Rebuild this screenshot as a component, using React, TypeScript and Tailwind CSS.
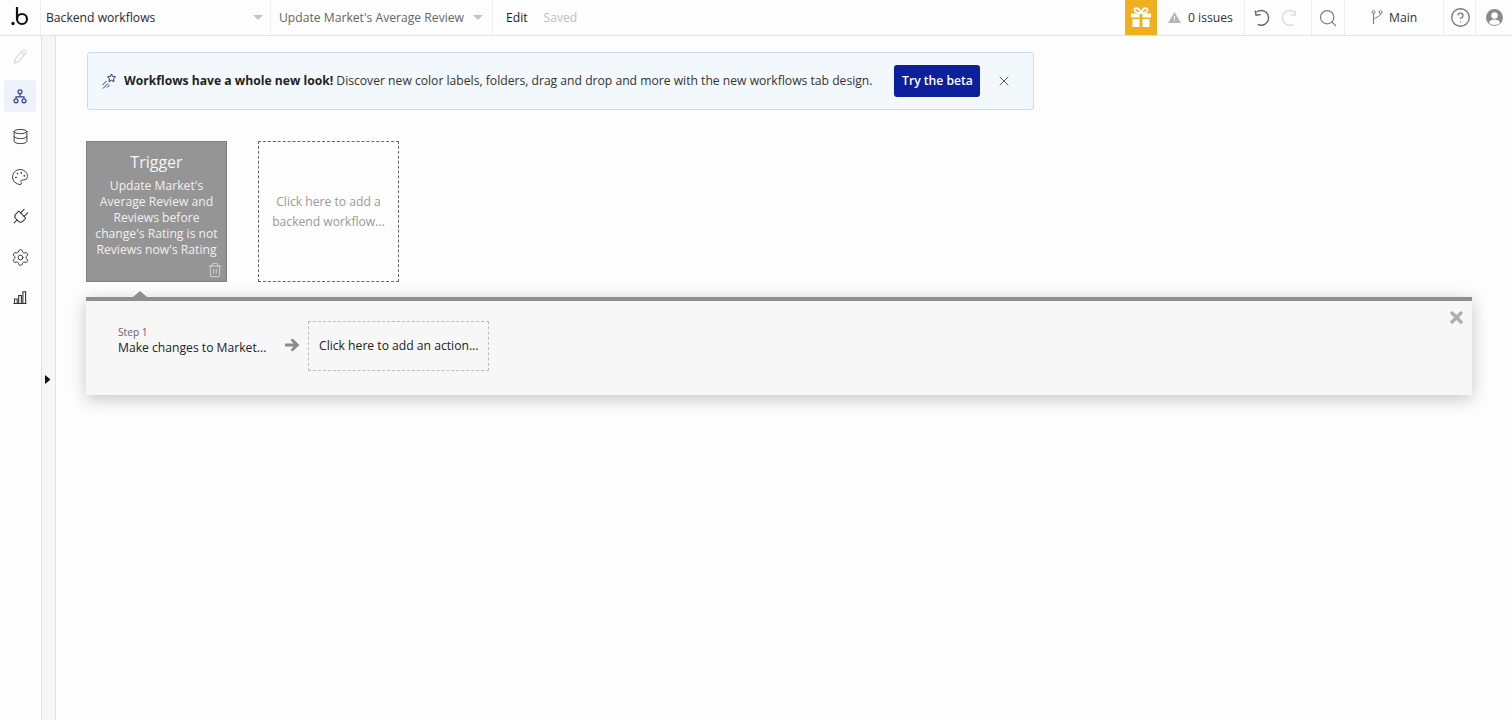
import React from "react";
import { Database, Palette, Search, CircleHelp, X, Trash2, Plug, Settings } from "lucide-react";

function Caret() {
  return <span className="w-0 h-0 shrink-0 border-x-[5px] border-x-transparent border-t-[5px] border-t-[#c4c4c4]" />;
}

function Logo() {
  return (
    <svg width="18" height="19" viewBox="0 0 18 19" fill="none">
      <circle cx="2" cy="16.500" r="1.700" fill="#111" />
      <path d="M6 0v12" stroke="#111" strokeWidth="2.200" />
      <circle cx="11" cy="12" r="5" stroke="#111" strokeWidth="2.200" />
    </svg>
  );
}
function Pencil() {
  return (
    <svg width="16" height="17" viewBox="0 0 16 17" fill="none" stroke="#d6d6d6" strokeWidth="1.1">
      <path d="M3.5 10.5 10.5 2.5a1.8 1.8 0 0 1 2.6 0l.4.4a1.8 1.8 0 0 1 0 2.6L6.5 13.5l-3.4 1.6a.7.7 0 0 1-.9-.9z" />
      <path d="M9.5 3.8l3.4 3" />
    </svg>
  );
}
function Sitemap() {
  return (
    <svg width="14" height="15" viewBox="0 0 14 15" fill="none" stroke="#2f3f9a" strokeWidth="1.2">
      <circle cx="7" cy="2.8" r="2" />
      <circle cx="3" cy="11.8" r="2" />
      <circle cx="11" cy="11.8" r="2" />
      <path d="M7 4.8v3M3 9.8V7.8h8v2" />
    </svg>
  );
}
function Bars() {
  return (
    <svg width="14" height="13" viewBox="0 0 14 13" fill="none" stroke="#333" strokeWidth="1.1">
      <path d="M.5 12.500h13M1.500 12.500V8h2.700v4.500M5.700 12.500V4.500h2.700v8M9.900 12.500V.8h2.700v11.700" />
    </svg>
  );
}
function Star() {
  return (
    <svg width="16" height="16" viewBox="0 0 16 16" fill="none" stroke="#1e2f8f" strokeWidth="1" className="shrink-0">
      <path d="M10.500 1l1.200 2.500 2.800.4-2 1.900.5 2.800-2.500-1.300L8 8.600l.5-2.800-2-1.900 2.800-.4z" />
      <path d="M5.500 8 1.500 12M7 10.500 2 15.500M8.500 12 6 14.500" />
    </svg>
  );
}
function GiftIcon() {
  return (
    <svg width="22" height="21" viewBox="0 0 22 21" fill="#fff">
      <path d="M1 6.500h8.500v4H1zM12.500 6.500H21v4h-8.500zM2.500 12h7v8h-7zM12.500 12h7v8h-7z" />
      <path d="M10.500 6C8 6 4.500 5.500 4.500 3c0-2.500 4-3 6.500 2.500C13.500 0 17.500.5 17.500 3c0 2.500-3.500 3-6 3z" fill="none" stroke="#fff" strokeWidth="1.800" />
    </svg>
  );
}
function Undo({ color, flip }: { color: string; flip?: boolean }) {
  return (
    <svg width="18" height="18" viewBox="0 0 17 17" fill="none" stroke={color} strokeWidth="1.4" className={flip ? "-scale-x-100" : ""}>
      <path d="M2.500 2.800A7 7 0 1 1 3.500 14.500" />
      <path d="M1.200 1.500 2 5.800l4.300-.5" />
    </svg>
  );
}
function Branch() {
  return (
    <svg width="12" height="15" viewBox="0 0 12 15" fill="none" stroke="#777" strokeWidth="1">
      <circle cx="2.500" cy="2.200" r="1.500" />
      <circle cx="9.500" cy="2.200" r="1.500" />
      <path d="M2.500 3.700v10.300M9.500 3.700c0 3.500-7 3.500-7 6.500" />
    </svg>
  );
}
function UserCircle() {
  return (
    <svg width="17" height="17" viewBox="0 0 17 17">
      <circle cx="8.500" cy="8.500" r="8.500" fill="#8b8b8b" />
      <circle cx="8.500" cy="6.500" r="3.200" fill="#fff" />
      <path d="M2.900 14c.8-2.600 3-3.500 5.600-3.500s4.800.9 5.600 3.500a8.500 8.500 0 0 1-11.200 0z" fill="#fff" />
    </svg>
  );
}

function SideItem({ children, active }: { children: React.ReactNode; active?: boolean }) {
  return (
    <div className={`w-8 h-8 flex items-center justify-center rounded ${active ? "bg-[#eef2fb]" : ""}`}>{children}</div>
  );
}

export default function App() {
  return (
    <div className="w-[1512px] h-[720px] overflow-hidden flex flex-col bg-[#fdfdfd] text-[#222] font-['Open_Sans',sans-serif]">
      <header className="h-9 shrink-0 flex border-b border-[#e4e4e4] bg-[#fdfdfd] text-[12.150px]">
        <div className="w-[41px] shrink-0 border-r border-[#f0f0f0] flex items-center justify-center pb-[2px]"><Logo /></div>
        <div className="w-[230px] shrink-0 border-r border-[#f0f0f0] flex items-center justify-between pl-[5px] pr-[7px]">
          <span className="text-[#2b2b2b] pt-px">Backend workflows</span>
          <Caret />
        </div>
        <div className="w-[222px] shrink-0 border-r border-[#f0f0f0] flex items-center justify-between pl-2 pr-[9px]">
          <span className="text-[#666] whitespace-nowrap pt-px">Update Market's Average Review</span>
          <Caret />
        </div>
        <div className="flex items-center pl-[13px] gap-4 pt-px">
          <span className="text-[#222]">Edit</span>
          <span className="text-[#c0c0c0]">Saved</span>
        </div>
        <div className="ml-auto flex h-full">
          <div className="w-8 bg-[#f0af1e] flex items-center justify-center"><GiftIcon /></div>
          <div className="w-[88px] border-r border-[#ececec] flex items-center pl-[11px] gap-[7px]">
            <svg width="13" height="11" viewBox="0 0 13 11" fill="#b5b5b5"><path d="M6.500 0 13 11H0zM6 4v3.500h1V4zM6 8.500v1h1v-1z" fillRule="evenodd" /></svg>
            <span className="text-[#333] pt-px">0 issues</span>
          </div>
          <div className="w-[67px] border-r border-[#ececec] flex items-center pl-[9px] gap-[7px]">
            <Undo color="#666" />
            <Undo color="#dcdcdc" flip />
          </div>
          <div className="w-[33px] border-r border-[#ececec] flex items-center justify-center">
            <Search size={20} strokeWidth={1.500} color="#808080" />
          </div>
          <div className="w-[99px] border-r border-[#ececec] flex items-center pl-[26px] gap-[6px]">
            <Branch />
            <span className="text-[#333] pt-px">Main</span>
          </div>
          <div className="w-8 border-r border-[#ececec] flex items-center justify-center">
            <CircleHelp size={21} strokeWidth={1.500} color="#777" className="ml-px" />
          </div>
          <div className="w-9 flex items-center justify-center"><UserCircle /></div>
        </div>
      </header>

      <div className="flex flex-1 min-h-0">
        <aside className="w-[41px] shrink-0 bg-[#fdfdfd] flex flex-col items-center pt-[4px] pr-[1px] gap-[8.300px]">
          <SideItem><Pencil /></SideItem>
          <SideItem active><Sitemap /></SideItem>
          <SideItem><Database size={17} strokeWidth={1.300} color="#333" /></SideItem>
          <SideItem><Palette size={18} strokeWidth={1.200} color="#333" /></SideItem>
          <SideItem><Plug size={20} strokeWidth={1.200} color="#333" className="rotate-45" /></SideItem>
          <SideItem><Settings size={19} strokeWidth={1.200} color="#333" /></SideItem>
          <SideItem><Bars /></SideItem>
        </aside>
        <div className="w-[15px] shrink-0 bg-[#f6f6f6] border-x border-[#e2e2e2] flex justify-center pt-[339px] pr-[2px]">
          <span className="w-0 h-[9px] border-y-[4.500px] border-y-transparent border-l-[5px] border-l-[#111]" />
        </div>

        <main className="flex-1 min-w-0 pl-[30px] pt-4">
          <div className="ml-px w-[947px] h-[58px] rounded-[3px] border border-[#cddbee] bg-[#f3f8fd] flex items-center pl-[13px]">
            <Star />
            <p className="ml-[7px] text-[12.150px] text-[#333] whitespace-nowrap">
              <b className="font-bold text-[#222]">Workflows have a whole new look!</b> Discover new color labels, folders, drag and drop and more with the new workflows tab design.
            </p>
            <button className="ml-[22px] w-[86px] h-8 shrink-0 rounded-[3px] bg-[#0c209c] text-white text-[12.150px] font-semibold whitespace-nowrap">Try the beta</button>
            <X size={16} strokeWidth={1.200} color="#333" className="ml-4 shrink-0" />
          </div>

          <div className="mt-[31px] flex gap-[31px]">
            <div className="relative w-[141px] h-[141px] bg-[#959595] border border-[#7f7f7f] flex flex-col items-center text-center text-white pt-[8px]">
              <div className="text-[16px] leading-[24px] text-[#f6f6f6]">Trigger</div>
              <div className="mt-[4px] text-[12.150px] leading-[16px] text-[#f0f0f0] whitespace-nowrap">
                Update Market's<br />Average Review and<br />Reviews before<br />change's Rating is not<br />Reviews now's Rating
              </div>
              <Trash2 size={16} strokeWidth={1} color="#eee" className="absolute right-[3px] bottom-[3px]" />
            </div>
            <div className="w-[141px] h-[141px] border border-dashed border-[#666] flex items-center justify-center text-center text-[12.150px] leading-[20px] text-[#9a9a9a]">
              <span>Click here to add a<br />backend workflow...</span>
            </div>
          </div>

          <div className="relative mt-[15px] w-[1386px] h-[98px] bg-[#f7f7f7] border-t-4 border-[#8f8f8f] shadow-[0_4px_16px_rgba(0,0,0,0.22)] flex items-start pl-[32px] pt-[20px]">
            <span className="absolute left-[47px] -top-[10px] w-0 h-0 border-x-[7px] border-x-transparent border-b-[6px] border-b-[#8f8f8f]" />
            <div className="w-[166px] pt-[4px]">
              <div className="text-[10.200px] leading-[14px] text-[#666]">Step 1</div>
              <div className="text-[12.150px] leading-[18px] text-[#222] whitespace-nowrap">Make changes to Market...</div>
            </div>
            <svg width="15" height="14" viewBox="0 0 15 14" fill="#8a8a8a" className="mt-[17px] ml-[1px]">
              <path d="M0 5.500h8.500L5.500 2 7.500 0.500 14.500 7l-7 6.500L5.500 12l3-3.500H0z" />
            </svg>
            <div className="ml-[8px] w-[181px] h-[50px] border border-dashed border-[#bdbdbd] pl-[10px] pt-[15px] text-[12.150px] leading-[18px] text-[#222] whitespace-nowrap">Click here to add an action...</div>
            <svg width="13" height="13" viewBox="0 0 13 13" className="absolute right-[9px] top-[10px]" stroke="#a9b0b0" strokeWidth="3.400" strokeLinecap="round">
              <path d="M2 2l9 9M11 2l-9 9" />
            </svg>
          </div>
        </main>
      </div>
    </div>
  );
}
